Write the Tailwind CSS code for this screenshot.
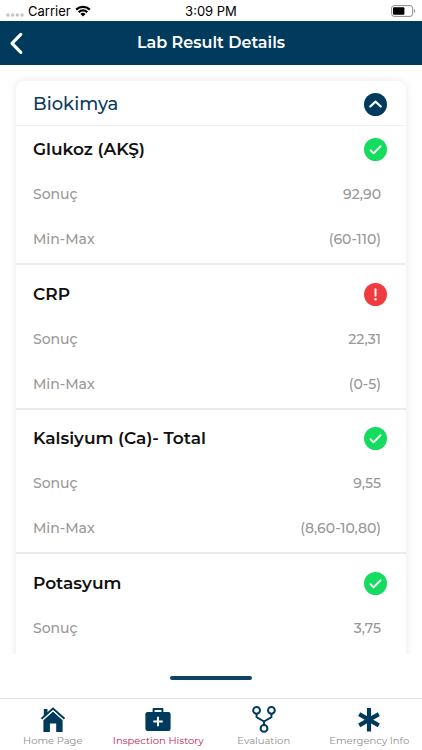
<!DOCTYPE html>
<html lang="en">
<head>
<meta charset="utf-8">
<meta name="viewport" content="width=device-width, initial-scale=1">
<title>Lab Result Details</title>
<script src="https://cdn.jsdelivr.net/npm/@tailwindcss/browser@4"></script>
</head>
<body class="flex h-screen flex-col overflow-hidden bg-white font-['Montserrat','Inter','Noto_Sans',sans-serif] text-black">

<svg class="hidden" aria-hidden="true">
  <symbol id="ok" viewBox="0 0 24 24"><circle cx="12" cy="12" r="12" fill="#14dc5e"/><path d="M6.8 12.8l3.2 3.2 7.2-7.4" fill="none" stroke="#fff" stroke-width="1.9" stroke-linecap="round" stroke-linejoin="round"/></symbol>
  <symbol id="alert" viewBox="0 0 24 24"><circle cx="12" cy="12" r="12" fill="#f03c3f"/><path d="M12 6.6v6.8" stroke="#fff" stroke-width="2" stroke-linecap="round"/><circle cx="12" cy="17" r="1.3" fill="#fff"/></symbol>
</svg>

<div class="grid h-[21px] shrink-0 grid-cols-3 items-center px-[6px] font-['Inter',sans-serif] text-[13px] leading-5">
  <div class="flex items-center gap-1">
    <svg class="mt-2 h-1 w-[18px]" viewBox="0 0 18 4" fill="#c4c4c4"><circle cx="2" cy="2" r="1.7"/><circle cx="6.7" cy="2" r="1.7"/><circle cx="11.4" cy="2" r="1.7"/><circle cx="16.1" cy="2" r="1.7"/></svg>
    <span>Carrier</span>
    <svg class="h-3 w-4" viewBox="0 0 16 12"><path d="M1.200 4.600a9.800 9.800 0 0 1 13.600 0M3.700 7.200a6.200 6.200 0 0 1 8.600 0" fill="none" stroke="#000" stroke-width="2.200"/><path d="M8 11.600L5.400 9a3.800 3.800 0 0 1 5.200 0z"/></svg>
  </div>
  <span class="text-center">3:09 PM</span>
  <svg class="h-3 w-[25px] justify-self-end" viewBox="0 0 25 12"><rect x=".6" y=".6" width="21" height="10.8" rx="2.6" fill="#fff" stroke="#8c8c8c"/><rect x="2" y="2.2" width="11.4" height="7.6" rx="1"/><path d="M23 4v4c1.600-.6 1.600-3.400 0-4z" fill="#8c8c8c"/></svg>
</div>

<header class="grid h-11 shrink-0 grid-cols-[40px_1fr_40px] items-center bg-[#003a5c] text-white">
  <button type="button" aria-label="Back" class="flex h-full items-center pl-2">
    <svg class="h-6 w-4" viewBox="0 0 16 24" fill="none" stroke="#fff" stroke-width="3.2" stroke-linecap="round" stroke-linejoin="round"><path d="M12.800 3.400L4 12.400l8.800 9"/></svg>
  </button>
  <h1 class="text-center text-[16px] font-semibold leading-6">Lab Result Details</h1>
</header>

<main class="min-h-0 flex-1 overflow-hidden px-4 pt-4">
  <section class="rounded-lg bg-white shadow-[0_0_8px_rgba(0,0,0,0.1)]">
    <div class="flex h-[45px] items-center justify-between border-b border-[#f1f1f1] pt-[2px] pr-[19px] pl-[17px]">
      <h2 class="text-[18px] font-medium text-[#0b3a5e]">Biokimya</h2>
      <button type="button" aria-label="Collapse Biokimya" aria-expanded="true">
        <svg class="size-[23px]" viewBox="0 0 24 24"><circle cx="12" cy="12" r="12" fill="#003a5c"/><path d="M6.500 14.200L12 9l5.500 5.200" fill="none" stroke="#fff" stroke-width="2.200" stroke-linecap="round" stroke-linejoin="round"/></svg>
      </button>
    </div>

    <article class="border-b-2 border-[#ebebeb] pt-px pr-[19px] pb-px pl-[17px]">
      <div class="flex h-[45px] items-center justify-between">
        <h3 class="text-[17px] font-semibold text-[#111]">Glukoz (AKŞ)</h3>
        <svg class="size-[23px]" role="img" aria-label="Normal"><use href="#ok"/></svg>
      </div>
      <dl class="grid auto-rows-[45px] grid-cols-2 items-center pr-[6px] text-[14px] font-medium text-[#989898]">
        <dt>Sonuç</dt><dd class="text-right">92,90</dd>
        <dt>Min-Max</dt><dd class="text-right">(60-110)</dd>
      </dl>
    </article>

    <article class="border-b-2 border-[#ebebeb] pt-[7px] pr-[19px] pb-px pl-[17px]">
      <div class="flex h-[45px] items-center justify-between">
        <h3 class="text-[17px] font-semibold text-[#111]">CRP</h3>
        <svg class="size-[23px]" role="img" aria-label="Out of range"><use href="#alert"/></svg>
      </div>
      <dl class="grid auto-rows-[45px] grid-cols-2 items-center pr-[6px] text-[14px] font-medium text-[#989898]">
        <dt>Sonuç</dt><dd class="text-right">22,31</dd>
        <dt>Min-Max</dt><dd class="text-right">(0-5)</dd>
      </dl>
    </article>

    <article class="border-b-2 border-[#ebebeb] pt-[6px] pr-[19px] pb-px pl-[17px]">
      <div class="flex h-[45px] items-center justify-between">
        <h3 class="text-[17px] font-semibold text-[#111]">Kalsiyum (Ca)- Total</h3>
        <svg class="size-[23px]" role="img" aria-label="Normal"><use href="#ok"/></svg>
      </div>
      <dl class="grid auto-rows-[45px] grid-cols-2 items-center pr-[6px] text-[14px] font-medium text-[#989898]">
        <dt>Sonuç</dt><dd class="text-right">9,55</dd>
        <dt>Min-Max</dt><dd class="text-right">(8,60-10,80)</dd>
      </dl>
    </article>

    <article class="pt-[7px] pr-[19px] pb-8 pl-[17px]">
      <div class="flex h-[45px] items-center justify-between">
        <h3 class="text-[17px] font-semibold text-[#111]">Potasyum</h3>
        <svg class="size-[23px]" role="img" aria-label="Normal"><use href="#ok"/></svg>
      </div>
      <dl class="grid auto-rows-[45px] grid-cols-2 items-center pr-[6px] text-[14px] font-medium text-[#989898]">
        <dt>Sonuç</dt><dd class="text-right">3,75</dd>
      </dl>
    </article>
  </section>
</main>

<div class="flex h-11 shrink-0 items-center justify-center pt-1">
  <div class="h-1 w-[82px] rounded-full bg-[#0f4264]"></div>
</div>

<nav class="grid h-[52px] shrink-0 grid-cols-4 border-t border-[#e2e2e2] pt-[6px] text-[10px] leading-4 whitespace-nowrap text-[#8e8e8e]">
  <a href="#home" class="flex flex-col items-center">
    <svg class="h-7 w-[26px]" viewBox="0 0 26 28" fill="#003a5c"><path d="M3.800 4h3.700v4L3.800 11zM13 6.600l9.600 8.600V27h-6.400v-8.600H9.900V27H3.400V15.200z"/><path d="M1.500 13.700L13 3.500l11.500 10.200" fill="none" stroke="#003a5c" stroke-width="2"/><path d="M2.800 15L13 5.900 23.200 15" fill="none" stroke="#fff" stroke-width=".8"/></svg>
    <span>Home Page</span>
  </a>
  <a href="#history" aria-current="page" class="flex flex-col items-center text-[#c2214f]">
    <svg class="h-7 w-[26px]" viewBox="0 0 26 28"><path d="M8.600 8V4h8.800v4" fill="none" stroke="#003a5c" stroke-width="2" stroke-linejoin="round"/><rect x=".4" y="7" width="25.200" height="19" rx="2.200" fill="#003a5c"/><path d="M13 11.800v9.400M8.300 16.500h9.400" stroke="#fff" stroke-width="2"/></svg>
    <span>Inspection History</span>
  </a>
  <a href="#evaluation" class="flex flex-col items-center">
    <svg class="h-7 w-[26px]" viewBox="0 0 26 28" fill="none" stroke="#003a5c" stroke-width="2"><circle cx="5.600" cy="5.300" r="3.400"/><circle cx="20.400" cy="5.300" r="3.400"/><circle cx="13" cy="23.400" r="3.400"/><path d="M5.600 8.700v3.500l7.400 4.300 7.400-4.300V8.700M13 16.500V20" stroke-linejoin="round"/></svg>
    <span>Evaluation</span>
  </a>
  <a href="#emergency" class="flex flex-col items-center">
    <svg class="h-7 w-[26px]" viewBox="0 0 26 28" fill="none" stroke="#003a5c" stroke-width="4.200" stroke-linejoin="round"><path d="M13 3v23.500M3.200 9.100l19.600 11.300M22.800 9.100L3.200 20.400"/></svg>
    <span>Emergency Info</span>
  </a>
</nav>
</body>
</html>
